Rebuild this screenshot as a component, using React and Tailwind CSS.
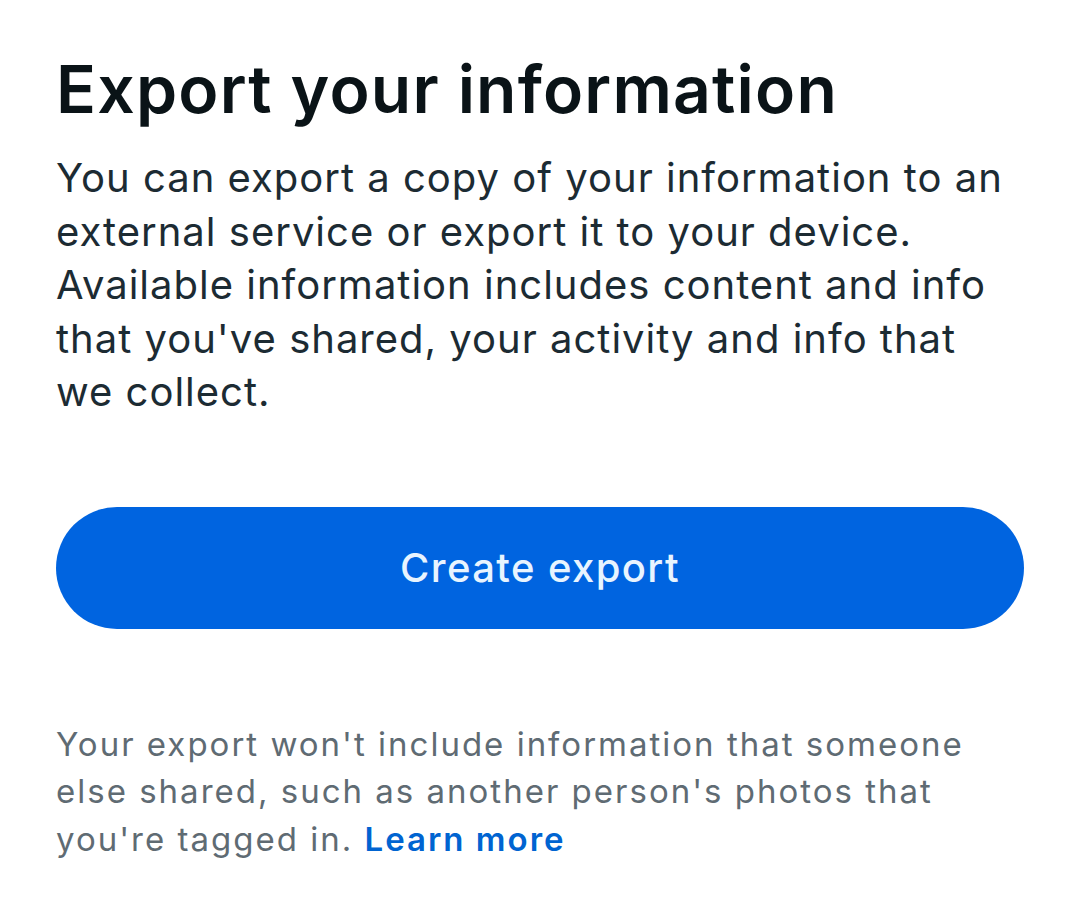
export default function App() {
  return (
    <div
      className="w-[1080px] h-[916px] bg-white px-[56px] pt-[49px]"
      style={{ fontFamily: 'Inter, "Noto Sans", sans-serif' }}
    >
      <h1 className="text-[66px] leading-[80px] font-semibold text-[#0a1317] tracking-[1.2px] whitespace-nowrap">
        Export your information
      </h1>
      <p className="mt-[22px] text-[40px] leading-[53.5px] text-[#1c2b33] tracking-[1px] whitespace-nowrap">
        You can export a copy of your information to an
        <br />
        external service or export it to your device.
        <br />
        Available information includes content and info
        <br />
        that you've shared, your activity and info that
        <br />
        we collect.
      </p>
      <button className="mt-[88px] w-[968px] h-[122px] rounded-full bg-[#0064e0] text-[#e8f4ff] text-[40px] font-medium tracking-[1.4px]">
        Create export
      </button>
      <p className="mt-[92px] text-[33px] leading-[47.5px] text-[#5f6b73] tracking-[2px] whitespace-nowrap">
        Your export won't include information that someone
        <br />
        else shared, such as another person's photos that
        <br />
        you're tagged in.{' '}
        <span className="font-semibold text-[#0064d1]">Learn more</span>
      </p>
    </div>
  );
}
